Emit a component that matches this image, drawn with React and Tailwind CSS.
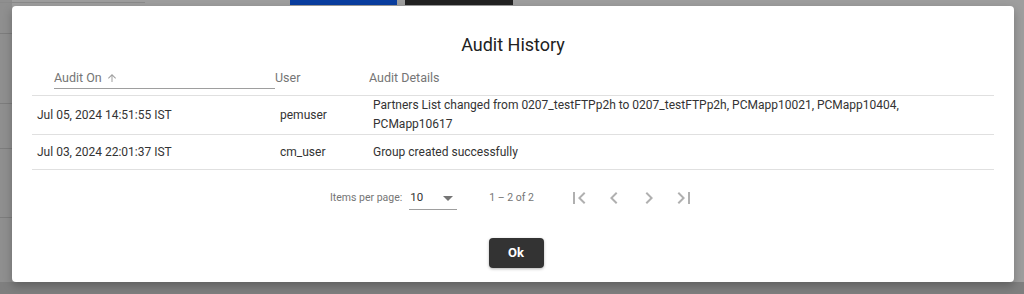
import React from "react";

const font = { fontFamily: "Roboto, 'Noto Sans', sans-serif" };

function Icon({ d }) {
  return (
    <svg width="24" height="24" viewBox="0 0 24 24" fill="#b0b0b0">
      <path d={d} />
    </svg>
  );
}

export default function App() {
  return (
    <div className="relative w-[1024px] h-[294px] overflow-hidden bg-[#9e9e9e]" style={font}>
      {/* background page hints */}
      <div className="absolute left-0 top-0 w-[12px] h-[294px] bg-[#8f8f8f]" />
      <div className="absolute left-0 top-[2px] w-[145px] h-px bg-[#8a8a8a]" />
      <div className="absolute left-0 top-[33px] w-[12px] h-px bg-[#7d7d7d]" />
      <div className="absolute left-0 top-[103px] w-[12px] h-px bg-[#7d7d7d]" />
      <div className="absolute left-0 top-[148px] w-[12px] h-px bg-[#7d7d7d]" />
      <div className="absolute left-0 top-[217px] w-[12px] h-px bg-[#7d7d7d]" />
      <div className="absolute left-[290px] top-0 w-[107px] h-[5px] bg-[#0a3ea0]" />
      <div className="absolute left-[405px] top-0 w-[108px] h-[5px] bg-[#222222]" />
      <div className="absolute left-0 top-[282px] w-[1024px] h-[12px] bg-[#7f7f7f]" />

      {/* dialog */}
      <div className="absolute left-[12px] top-[6px] w-[1002px] h-[276px] bg-white rounded-[4px] shadow-[0_4px_10px_rgba(0,0,0,0.25)] flex flex-col">
        <div className="h-[72px] flex items-start justify-center pt-[28px]">
          <h2 className="text-[18px] leading-[22px] text-[#212121] font-normal">Audit History</h2>
        </div>

        <div className="mx-[20px] text-[12px]">
          {/* header */}
          <div className="grid grid-cols-[243px_94px_1fr] h-[11px] items-end text-[#757575] text-[12.5px]">
            <div className="pl-[22px]">
              <div className="w-[221px] border-b border-[#9e9e9e] h-[19px] flex items-start gap-[4px] leading-[16px] -mt-[8px]">
                <span>Audit On</span>
                <svg width="12" height="14" viewBox="0 0 24 24" fill="#a0a0a0" className="mt-[1px]">
                  <path d="M4 12l1.41 1.41L11 7.83V20h2V7.83l5.58 5.59L20 12l-8-8-8 8z" />
                </svg>
              </div>
            </div>
            <div className="self-start -mt-[8px] leading-[16px]">User</div>
            <div className="self-start -mt-[8px] leading-[16px]">Audit Details</div>
          </div>
          <div className="h-[7px] border-b border-[#e0e0e0]" />

          {/* row 1 */}
          <div className="grid grid-cols-[243px_94px_1fr] min-h-[37px] items-center border-b border-[#e0e0e0] text-[#333333]">
            <div className="pl-[5px]">Jul 05, 2024 14:51:55 IST</div>
            <div className="pl-[5px]">pemuser</div>
            <div className="pl-[4px] leading-[19px] pr-[80px]">
              Partners List changed from 0207_testFTPp2h to 0207_testFTPp2h, PCMapp10021, PCMapp10404, PCMapp10617
            </div>
          </div>
          {/* row 2 */}
          <div className="grid grid-cols-[243px_94px_1fr] h-[35px] items-center border-b border-[#e0e0e0] text-[#333333]">
            <div className="pl-[5px]">Jul 03, 2024 22:01:37 IST</div>
            <div className="pl-[5px]">cm_user</div>
            <div className="pl-[4px]">Group created successfully</div>
          </div>

          {/* paginator */}
          <div className="h-[55px] flex items-center pl-[298px] text-[#757575]">
            <span className="text-[10.5px] mr-[7px]">Items per page:</span>
            <div className="w-[48px] h-[22px] border-b border-[#9e9e9e] flex items-center justify-between pl-[1px] pr-[4px] mt-[2px]">
              <span className="text-[11.5px] text-[#333333]">10</span>
              <svg width="10" height="5" viewBox="0 0 10 5" fill="#757575">
                <path d="M0 0l5 5 5-5z" />
              </svg>
            </div>
            <span className="text-[10.5px] ml-[32px] text-[#757575]">1 – 2 of 2</span>
            <div className="flex items-center ml-[33px] gap-[11px]">
              <Icon d="M18.41 16.59L13.82 12l4.59-4.59L17 6l-6 6 6 6zM6 6h2v12H6z" />
              <Icon d="M15.41 7.41L14 6l-6 6 6 6 1.41-1.41L10.83 12z" />
              <Icon d="M10 6L8.59 7.41 13.17 12l-4.58 4.59L10 18l6-6z" />
              <Icon d="M5.59 7.41L10.18 12l-4.59 4.59L7 18l6-6-6-6zM16 6h2v12h-2z" />
            </div>
          </div>
        </div>

        <div className="flex justify-center mt-[13px] pl-[6px]">
          <button className="w-[55px] h-[30px] rounded-[4px] bg-[#333333] text-white text-[13px] font-bold shadow-[0_1px_3px_rgba(0,0,0,0.3)]">
            Ok
          </button>
        </div>
      </div>
    </div>
  );
}
